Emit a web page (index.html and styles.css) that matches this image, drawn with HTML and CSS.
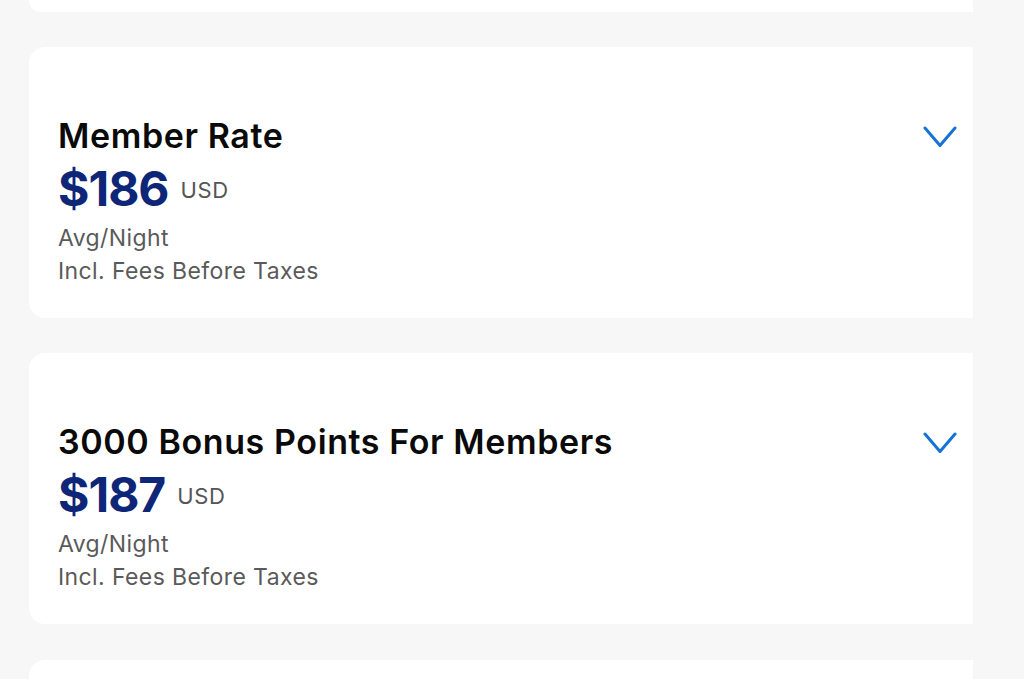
FILE: index.html
```html
<!DOCTYPE html>
<html lang="en">
<head>
<meta charset="utf-8">
<title>Rates</title>
<link rel="stylesheet" href="styles.css">
</head>
<body>
<div class="rates">
  <section class="card card-first" aria-hidden="true"></section>
  <section class="card">
    <div class="card-head">
      <h2 class="title">Member Rate</h2>
      <svg class="chev" viewBox="0 0 34 22" width="34" height="22"><polyline points="2,2 17,19.5 32,2"/></svg>
    </div>
    <div class="price-row"><span class="price">$186</span><span class="cur">USD</span></div>
    <p class="note">Avg/Night</p>
    <p class="note">Incl. Fees Before Taxes</p>
  </section>
  <section class="card">
    <div class="card-head">
      <h2 class="title">3000 Bonus Points For Members</h2>
      <svg class="chev" viewBox="0 0 34 22" width="34" height="22"><polyline points="2,2 17,19.5 32,2"/></svg>
    </div>
    <div class="price-row"><span class="price">$187</span><span class="cur">USD</span></div>
    <p class="note">Avg/Night</p>
    <p class="note">Incl. Fees Before Taxes</p>
  </section>
  <section class="card card-last" aria-hidden="true"></section>
</div>
</body>
</html>
```

FILE: styles.css
```css
html, body {
  margin: 0;
  padding: 0;
  background: #f7f7f7;
  overflow: hidden;
  height: 679px;
}
body {
  font-family: "Inter", "Roboto", "Liberation Sans", sans-serif;
}
.rates {
  display: flex;
  flex-direction: column;
  gap: 35px;
  padding-left: 29px;
  width: 944px;
}
.card {
  background: #ffffff;
  border-radius: 16px 0 0 16px;
  height: 271px;
  box-sizing: border-box;
  padding: 69px 16px 0 29px;
  flex-shrink: 0;
}
.card-first {
  height: 12px;
  padding: 0;
  border-radius: 0 0 0 16px;
}
.card-last {
  height: 40px;
  padding: 0;
  margin-top: 1px;
}
.card-head {
  display: flex;
  align-items: center;
  justify-content: space-between;
}
.title {
  margin: 0;
  font-size: 34px;
  line-height: 40px;
  font-weight: 600;
  color: #0a0a0a;
  letter-spacing: 0.6px;
}
.chev {
  fill: none;
  stroke: #1572d6;
  stroke-width: 3;
  stroke-linecap: round;
  stroke-linejoin: round;
  margin-top: 2px;
}
.price-row {
  display: flex;
  align-items: center;
  gap: 12px;
  margin-top: 5px;
}
.price {
  font-size: 48px;
  line-height: 56px;
  font-weight: 700;
  color: #0d2677;
  letter-spacing: -1px;
}
.cur {
  font-size: 22px;
  line-height: 26px;
  color: #555555;
  letter-spacing: 0.6px;
  margin-top: 1px;
}
.price-row + .note {
  margin-top: 5px;
}
.note {
  margin: 0;
  font-size: 23px;
  line-height: 33px;
  color: #5a5a5a;
  letter-spacing: 0.4px;
}
```
